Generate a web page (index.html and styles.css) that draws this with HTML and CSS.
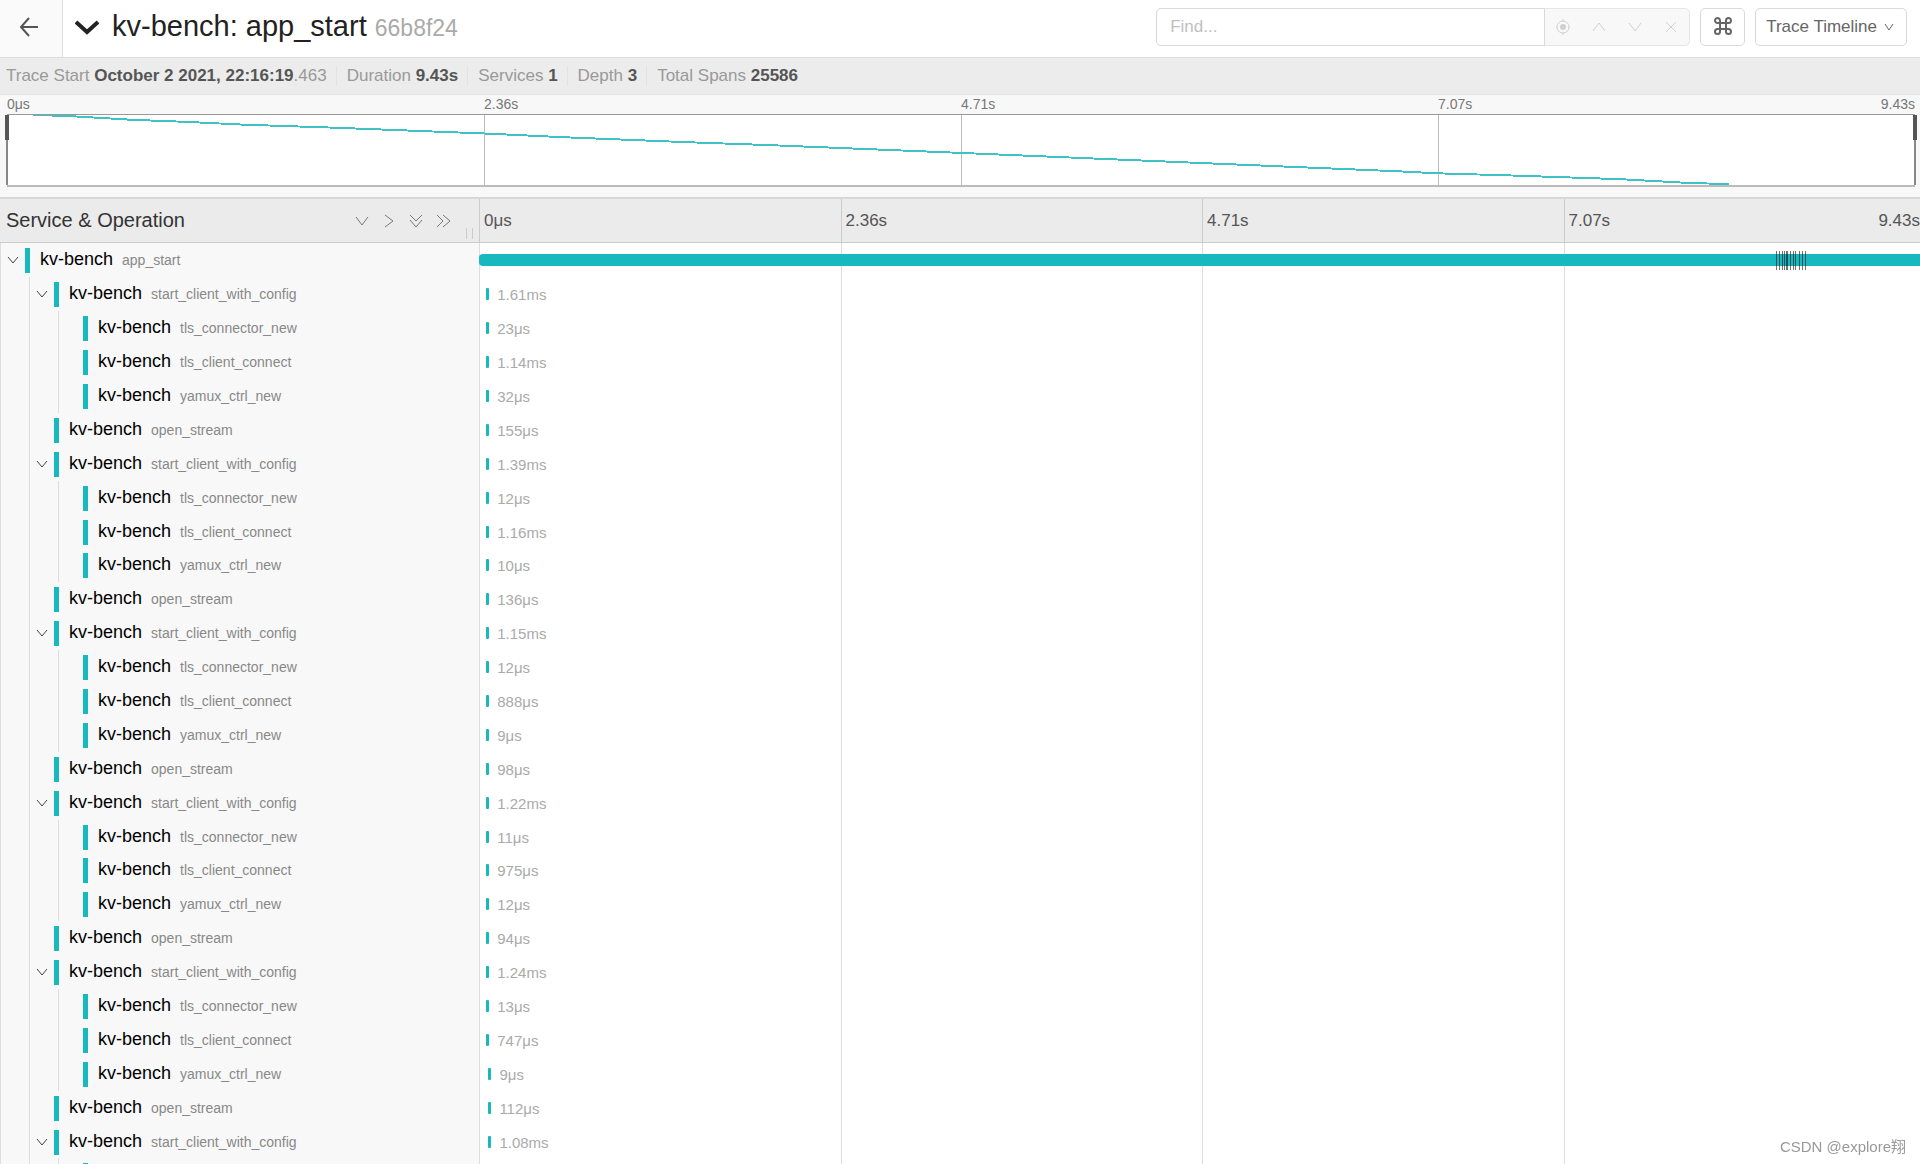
FILE: index.html
```html
<!DOCTYPE html>
<html lang="en">
<head>
<meta charset="utf-8">
<meta name="viewport" content="width=device-width, initial-scale=1">
<title>kv-bench: app_start</title>
<link rel="stylesheet" href="styles.css">
</head>
<body>
<header class="topbar">
  <a class="back" href="#" aria-label="Back">
    <svg width="20" height="20" viewBox="0 0 20 20"><path d="M19 10H2M10 1L2 10l8 9"/></svg>
  </a>
  <button class="title-toggle" type="button" aria-expanded="true" aria-label="Toggle summary">
    <svg width="24" height="16" viewBox="0 0 24 16"><path d="M1 2l11 10L23 2"/></svg>
  </button>
  <h1 class="title">kv-bench: app_start <small class="trace-id">66b8f24</small></h1>
  <div class="search">
    <input class="search-input" type="text" placeholder="Find..." aria-label="Find">
    <button class="search-btn" type="button" disabled aria-label="Locate"><svg width="16" height="18" viewBox="0 0 16 18"><circle cx="8" cy="9" r="6"/><circle class="dot" cx="8" cy="9" r="3"/><path d="M8 1v2M8 15v2M1 9h1M14 9h1"/></svg></button>
    <button class="search-btn" type="button" disabled aria-label="Previous"><svg width="14" height="14" viewBox="0 0 14 14"><path d="M1 11l6-8 6 8"/></svg></button>
    <button class="search-btn" type="button" disabled aria-label="Next"><svg width="14" height="14" viewBox="0 0 14 14"><path d="M1 3l6 8 6-8"/></svg></button>
    <button class="search-btn" type="button" disabled aria-label="Clear"><svg width="14" height="14" viewBox="0 0 14 14"><path d="M2 2l10 10M12 2L2 12"/></svg></button>
  </div>
  <button class="btn btn-key" type="button" aria-label="Keyboard shortcuts">
    <svg width="20" height="20" viewBox="0 0 20 20"><path d="M7 7H4.500A2.500 2.500 0 1 1 7 4.500V15.500A2.500 2.500 0 1 1 4.500 13H15.500A2.500 2.500 0 1 1 13 15.500V4.500A2.500 2.500 0 1 1 15.500 7Z"/></svg>
  </button>
  <button class="btn btn-view" type="button">Trace Timeline
    <svg width="10" height="10" viewBox="0 0 10 10"><path d="M1 2l4 6 4-6"/></svg>
  </button>
</header>

<ul class="summary">
  <li>Trace Start <strong>October 2 2021, 22:16:19</strong>.463</li>
  <li>Duration <strong>9.43s</strong></li>
  <li>Services <strong>1</strong></li>
  <li>Depth <strong>3</strong></li>
  <li>Total Spans <strong>25586</strong></li>
</ul>

<section class="minimap" aria-label="Trace overview">
  <div class="minimap-ticks"><span>0μs</span><span>2.36s</span><span>4.71s</span><span class="pair"><span>7.07s</span><span>9.43s</span></span></div>
  <div class="minimap-graph">
    <div class="minimap-grid"><i></i><i></i><i></i><i></i></div>
    <svg class="minimap-line" viewBox="0 0 1908 72" preserveAspectRatio="none"><polyline points="26,0 61,1 126,5 178,7 238,10 326,13 477,19 560,23 681,28 763,31 954,39 1393,58 1431,60 1498,62 1613,66 1683,70 1722,71"/></svg>
    <span class="scrubber scrubber-start"></span>
    <span class="scrubber scrubber-end"></span>
  </div>
</section>

<div class="timeline-head">
  <div class="head-name">
    <h2>Service &amp; Operation</h2>
    <button type="button" aria-label="Expand one level"><svg width="16" height="16" viewBox="0 0 16 16"><path d="M2 4l6 8 6-8"/></svg></button>
    <button type="button" aria-label="Collapse one level"><svg width="16" height="16" viewBox="0 0 16 16"><path d="M4 2l8 6-8 6"/></svg></button>
    <button type="button" aria-label="Expand all"><svg width="16" height="16" viewBox="0 0 16 16"><path d="M2 2l6 6 6-6M2 7l6 7 6-7"/></svg></button>
    <button type="button" aria-label="Collapse all"><svg width="16" height="16" viewBox="0 0 16 16"><path d="M2 2l6 6-6 6M8 2l7 6-7 6"/></svg></button>
    <span class="resizer"></span>
  </div>
  <div class="head-ticks"><span>0μs</span><span>2.36s</span><span>4.71s</span><span class="pair"><span>7.07s</span><span>9.43s</span></span></div>
</div>

<main class="rows" id="rows"></main>
<div class="watermark">CSDN @explore翔</div>
<script src="script.js"></script>
</body>
</html>
```
FILE: styles.css
```css
* { box-sizing: border-box; }

body {
  margin: 0;
  height: 100vh;
  display: flex;
  flex-direction: column;
  overflow: hidden;
  background: #fff;
  color: #222;
  font-family: "Liberation Sans", Arial, "Noto Sans CJK SC", sans-serif;
  font-size: 17px;
}

svg { display: block; fill: none; stroke: currentColor; }
button { padding: 0; border: 0; background: none; color: inherit; font: inherit; }
h1, h2 { margin: 0; font-weight: 400; }

/* Top bar */
.topbar {
  flex: none;
  display: flex;
  align-items: center;
  height: 58px;
  padding-right: 13px;
  border-bottom: 1px solid #ddd;
}
.back {
  display: flex;
  align-items: center;
  justify-content: center;
  align-self: stretch;
  width: 63px;
  padding: 0 4px 3px 0;
  background: #fafafa;
  border-right: 1px solid #ddd;
  color: #555;
}
.back svg { stroke-width: 2; }
.title-toggle { margin: 0 13px 2px 12px; }
.title-toggle svg { stroke-width: 4; }
.title { flex: 1; font-size: 29px; line-height: 36px; padding-bottom: 3px; }
.trace-id { color: #aaa; font-size: 23px; }

.search {
  display: flex;
  width: 534px;
  height: 38px;
  margin-bottom: 4px;
  background: #f8f8f8;
  border: 1px solid #e6e6e6;
  border-radius: 5px;
}
.search-input {
  flex: 1;
  min-width: 0;
  margin: -1px 0 -1px -1px;
  padding: 0 13px;
  border: 1px solid #d9d9d9;
  border-radius: 5px 0 0 5px;
  background: #fff;
  font: inherit;
}
.search-input::placeholder { color: #bfbfbf; }
.search-btn {
  display: flex;
  align-items: center;
  justify-content: center;
  width: 36px;
  color: #d0d0d0;
}
.search-btn .dot { fill: currentColor; stroke: none; }

.btn {
  display: flex;
  align-items: center;
  justify-content: center;
  height: 38px;
  margin: 0 0 4px 10px;
  border: 1px solid #d9d9d9;
  border-radius: 5px;
  background: #fff;
  color: #666;
}
.btn-key { width: 45px; padding-bottom: 2px; }
.btn-key svg { stroke-width: 2; }
.btn-view { gap: 7px; padding: 0 12px 0 10px; }

/* Summary strip */
.summary {
  flex: none;
  display: flex;
  align-items: center;
  height: 37px;
  margin: 0;
  padding: 0 6px;
  list-style: none;
  background: #ececec;
  border-bottom: 1px solid #e2e2e2;
  color: #999;
}
.summary li + li {
  margin-left: 9px;
  padding-left: 10px;
  border-left: 1px solid #e2e2e2;
}
.summary strong { color: #555; }

/* Overview graph */
.minimap { flex: none; padding: 0 5px 10px 7px; background: #f8f8f8; }
.minimap-ticks {
  display: grid;
  grid-template-columns: repeat(4, 1fr);
  color: #777;
  font-size: 14px;
  line-height: 19px;
}
.pair { display: flex; justify-content: space-between; }
.minimap-graph {
  position: relative;
  height: 73px;
  background: #fff;
  border-top: 1px solid #999;
  border-bottom: 2px solid #bbb;
}
.minimap-grid { display: grid; grid-template-columns: repeat(4, 1fr); height: 100%; }
.minimap-grid i + i { border-left: 1px solid #bbb; }
.minimap-line {
  position: absolute;
  inset: 0;
  width: 100%;
  height: 100%;
  stroke: #3fc2c7;
  stroke-width: 2;
  shape-rendering: crispEdges;
}
.scrubber { position: absolute; top: 0; bottom: 0; width: 2px; background: #888; }
.scrubber::before {
  content: "";
  position: absolute;
  top: 0;
  left: -1px;
  width: 4px;
  height: 25px;
  background: #555;
}
.scrubber-start { left: -1px; }
.scrubber-end { right: -1px; }

/* Timeline header */
.timeline-head {
  flex: none;
  display: flex;
  height: 46px;
  background: #ebebeb;
  border-top: 2px solid #d8d8d8;
  border-bottom: 1px solid #ccc;
  overflow: hidden;
}
.head-name {
  flex: none;
  position: relative;
  display: flex;
  align-items: center;
  gap: 11px;
  width: calc(25% - 1px);
  padding: 0 28px 0 6px;
  color: #777;
}
.head-name h2 { flex: 1; color: #333; font-size: 20px; }
.head-name svg { stroke-width: 1; }
.resizer {
  position: absolute;
  right: 6px;
  bottom: 3px;
  width: 7px;
  height: 11px;
  border: solid #ccc;
  border-width: 0 1px;
}
.head-ticks {
  flex: none;
  display: grid;
  grid-template-columns: repeat(4, 1fr);
  width: calc(75% + 6px);
  line-height: 43px;
  color: #555;
}
.head-ticks > span { padding: 0 5px 0 4px; border-left: 1px solid #ccc; }

/* Span rows */
.rows { flex: 1; min-height: 0; overflow: hidden; }
.row { display: flex; height: 34px; overflow: hidden; }
.row:nth-child(9n) { height: 33px; }
.row-name {
  flex: none;
  display: flex;
  width: calc(25% - 1px);
  background: #f8f8f8;
  border-left: 1px solid #ddd;
}
.guide { width: 29px; border-right: 1px solid #ddd; }
.toggle {
  display: flex;
  align-items: center;
  justify-content: center;
  width: 24px;
  padding-right: 1px;
  color: #444;
}
.row-label {
  height: 25px;
  margin-top: 5px;
  padding-left: 10px;
  border-left: 5px solid #17b8be;
  color: #000;
  font-size: 18px;
  line-height: 23px;
  white-space: nowrap;
}
.row-label small { margin-left: 4px; color: #888; font-size: 14px; }
.row-view {
  flex: none;
  position: relative;
  display: grid;
  grid-template-columns: repeat(4, 1fr);
  width: calc(75% + 6px);
}
.tick { border-left: 1px solid #ddd; }
.bar-line {
  position: absolute;
  inset: 0;
  display: flex;
  align-items: center;
  gap: 8px;
}
.bar { height: 12px; min-width: 3px; background: #17b8be; border-radius: 1px; }
.bar-root { border-radius: 4px; }
.bar-line span { color: #aaa; font-size: 15px; line-height: 20px; margin-top: 2px; }
.logs {
  position: absolute;
  top: 8px;
  left: 89.7%;
  stroke: #000;
  stroke-opacity: 0.55;
}

.watermark {
  position: fixed;
  right: 14px;
  bottom: 8px;
  color: #999;
  font-size: 15px;
  line-height: 18px;
}
```
FILE: script.js
```js
// Each client start is followed by its three children and an open_stream span.
const ops = ["start_client_with_config", "tls_connector_new", "tls_client_connect", "yamux_ctrl_new", "open_stream"];
const durations = [
  ["1.61ms", "23μs", "1.14ms", "32μs", "155μs"],
  ["1.39ms", "12μs", "1.16ms", "10μs", "136μs"],
  ["1.15ms", "12μs", "888μs", "9μs", "98μs"],
  ["1.22ms", "11μs", "975μs", "12μs", "94μs"],
  ["1.24ms", "13μs", "747μs", "9μs", "112μs"],
  ["1.08ms"]
];

const spans = [{ op: "app_start", depth: 0, start: 0, width: 100, parent: true }];
durations.forEach(group => group.forEach((time, i) => {
  spans.push({
    op: ops[i],
    depth: i > 0 && i < 4 ? 2 : 1,
    start: spans.length < 24 ? 0.5 : 0.65,
    width: 0,
    time,
    parent: i === 0
  });
}));
spans.push({ depth: 2, start: 0.65, width: 0 });

const chevron = '<svg width="12" height="12" viewBox="0 0 12 12"><path d="M1 3l5 6 5-6"/></svg>';
const marks = [0, 3, 6, 8, 10, 11, 14, 17, 19, 23, 26, 29];
const logs = '<svg class="logs" width="31" height="19" viewBox="0 0 31 19"><path d="' +
  marks.map(x => `M${x + 0.5} 0v19`).join("") + '"/></svg>';

document.getElementById("rows").innerHTML = spans.map(s => `
  <div class="row">
    <div class="row-name">
      ${'<span class="guide"></span>'.repeat(s.depth)}
      ${s.parent ? `<button class="toggle" type="button" aria-label="Toggle children">${chevron}</button>` : '<span class="toggle"></span>'}
      <div class="row-label">${s.op ? `kv-bench <small>${s.op}</small>` : ""}</div>
    </div>
    <div class="row-view">
      <i class="tick"></i><i class="tick"></i><i class="tick"></i><i class="tick"></i>
      <div class="bar-line">
        <div class="bar${s.depth ? "" : " bar-root"}" style="margin-left:${s.start}%;width:${s.width}%"></div>
        ${s.time ? `<span>${s.time}</span>` : ""}
      </div>
      ${s.depth ? "" : logs}
    </div>
  </div>`).join("");
```
